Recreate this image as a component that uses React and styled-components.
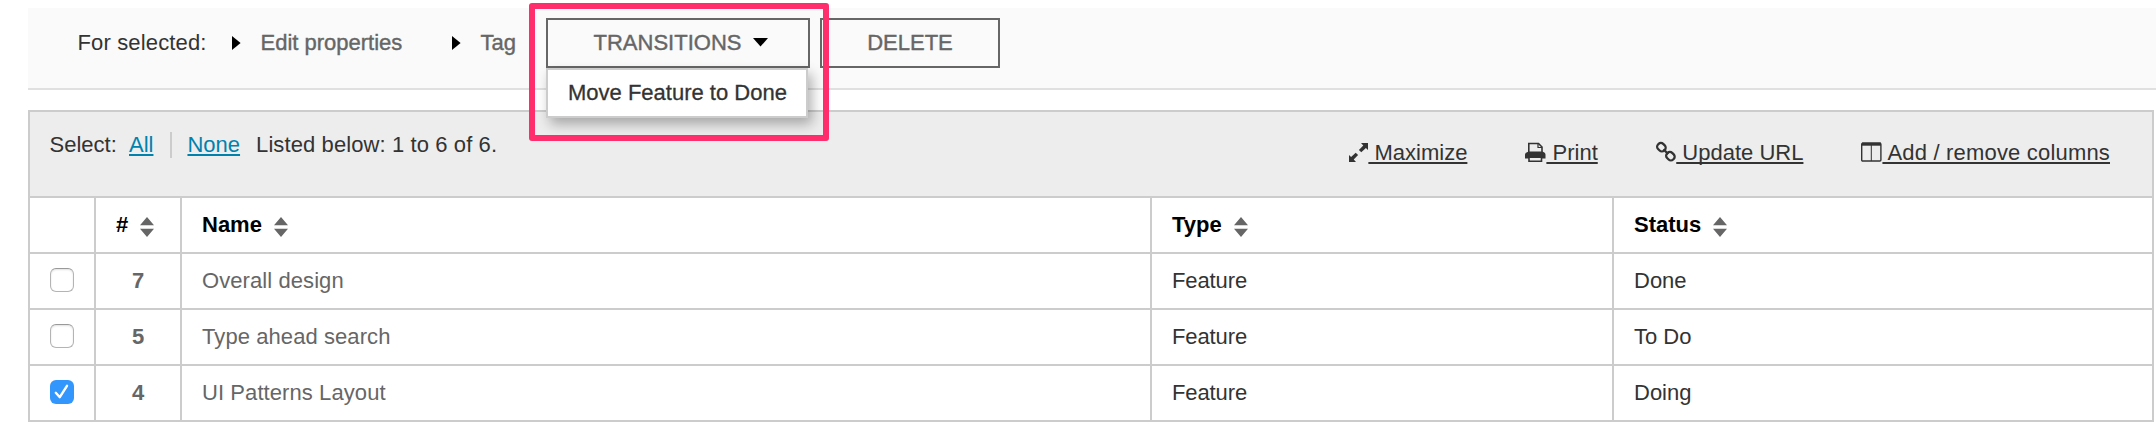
import React from "react";
import styled, { createGlobalStyle } from "styled-components";

const GlobalStyle = createGlobalStyle`
  *, *::before, *::after { box-sizing: border-box; }
  body {
    margin: 0;
    background: #fff;
    color: #333;
    font: 22px/26px "Liberation Sans", Arial, Helvetica, sans-serif;
    overflow: hidden;
  }
`;

const Page = styled.main`
  position: relative;
  height: 422px;
  padding: 8px 2px 0 28px;
`;

const ActionBar = styled.header`
  display: flex;
  align-items: flex-start;
  height: 82px;
  margin-right: -2px;
  padding: 10px 0 0 49.5px;
  background: #fafafa;
  border-bottom: 2px solid #e0e0e0;
`;

const Label = styled.span`
  width: 154.5px;
  line-height: 49px;
  white-space: nowrap;
  letter-spacing: 0.15px;
`;

const Disclosure = styled.button`
  display: flex;
  align-items: center;
  gap: 19.5px;
  width: ${(p) => p.$width}px;
  height: 49px;
  padding: 0;
  border: 0;
  background: none;
  color: #666;
  font: inherit;
  -webkit-text-stroke: 0.4px #666;
  white-space: nowrap;
`;

const MenuAnchor = styled.div`
  position: relative;
  margin-right: 10px;
`;

const Button = styled.button`
  display: flex;
  align-items: center;
  justify-content: center;
  gap: 12px;
  width: ${(p) => p.$width}px;
  height: 50px;
  padding: 0 0 1px ${(p) => p.$indent || 0}px;
  border: 2px solid #666;
  background: #fafafa;
  color: #666;
  font: inherit;
  -webkit-text-stroke: 0.4px #666;
  white-space: nowrap;
`;

const Menu = styled.ul`
  position: absolute;
  z-index: 2;
  top: 50px;
  left: 0;
  width: 262px;
  height: 50px;
  margin: 0;
  padding: 0 0 0 20px;
  list-style: none;
  border: 2px solid #ccc;
  background: #fff;
  box-shadow: 4px 6px 12px rgba(0, 0, 0, 0.3);
`;

const MenuItem = styled.li`
  line-height: 46px;
  white-space: nowrap;
  -webkit-text-stroke: 0.3px #333;
`;

const Highlight = styled.div`
  position: absolute;
  z-index: 3;
  top: 3px;
  left: 529px;
  width: 300px;
  height: 138px;
  border: 6px solid #ff2d6b;
  border-radius: 3px;
  pointer-events: none;
`;

const Panel = styled.section`
  margin-top: 20px;
  border: 2px solid #ccc;
`;

const PanelBar = styled.div`
  display: flex;
  justify-content: space-between;
  height: 84px;
  padding: 20px 42px 0 19.5px;
  background: #ededed;
`;

const Selection = styled.div`
  display: flex;
  height: 26px;
  white-space: nowrap;
`;

const SelectLabel = styled.span`
  width: 79.5px;
`;

const SelectLink = styled.a`
  color: #0082ad;
  text-decoration: underline;
  text-decoration-thickness: 2px;
  text-underline-offset: 2px;
  text-decoration-skip-ink: none;
`;

const Separator = styled.i`
  width: 2px;
  height: 26px;
  margin: 0 15.5px 0 16.5px;
  background: #ccc;
`;

const Summary = styled.span`
  margin-left: 16px;
  letter-spacing: 0.1px;
`;

const Tools = styled.nav`
  display: flex;
  padding-top: 8px;
`;

const Tool = styled.a`
  display: flex;
  margin-left: ${(p) => p.$before || 0}px;
  white-space: pre;
`;

const ToolText = styled.span`
  text-decoration: underline;
  text-decoration-thickness: 2px;
  text-underline-offset: 2px;
  text-decoration-skip-ink: none;
  letter-spacing: ${(p) => p.$spacing || 0}px;
`;

const Row = styled.div`
  display: grid;
  grid-template-columns: 66px 86px 970px 462px 1fr;
  height: 56px;
  border-top: 2px solid #ccc;
`;

const Cell = styled.div`
  display: flex;
  align-items: center;
  justify-content: ${(p) => (p.$center ? "center" : "flex-start")};
  padding: ${(p) => (p.$center ? "0 0 1px" : "0 0 1px 20px")};
  border-right: ${(p) => (p.$last ? "0" : "2px solid #ccc")};
  color: ${(p) => p.$color || "#333"};
  font-weight: ${(p) => (p.$bold ? 700 : 400)};
  letter-spacing: ${(p) => p.$spacing || 0}px;
`;

const HeadCell = styled(Cell)`
  gap: 12px;
  padding-right: ${(p) => (p.$center ? 6 : 0)}px;
  color: #000;
  font-weight: 700;
`;

const SortIcon = styled.svg`
  margin-top: 4px;
`;

const Check = styled.span`
  display: flex;
  align-items: center;
  justify-content: center;
  width: 24px;
  height: 24px;
  margin-top: -1px;
  border: ${(p) => (p.$on ? "0" : "1px solid #b4b4b4")};
  border-top-color: #999;
  border-radius: 6px;
  background: ${(p) => (p.$on ? "#3296fd" : "#fff")};
  box-shadow: ${(p) => (p.$on ? "none" : "inset 0 1px 2px rgba(0, 0, 0, 0.12)")};
`;

const RightTriangle = () => (
  <svg width="9" height="14" viewBox="0 0 9 14"><path d="M0 0 8.6 7 0 14Z" fill="#000" /></svg>
);

const DownTriangle = () => (
  <svg width="15" height="9" viewBox="0 0 15 9"><path d="M0 0h15L7.5 8.6Z" fill="#000" /></svg>
);

const Sort = () => (
  <SortIcon width="14" height="20" viewBox="0 0 14 20" fill="#666">
    <path d="M7 0 14 8.300H0ZM0 11.700h14L7 20Z" />
  </SortIcon>
);

const MaximizeIcon = () => (
  <svg width="19" height="26" viewBox="0 0 19 26" fill="#333">
    <path d="M12 3h7v7l-2.100-1.900-4.600 4.200-2.400-2.400 4.400-4.500Z" />
    <path d="M7 22H0v-7l2.100 1.900 4.600-4.200 2.400 2.400-4.400 4.500Z" />
  </svg>
);

const PrintIcon = () => (
  <svg width="21" height="26" viewBox="0 0 21 26">
    <path d="M3.800 13V3.500h9.700l3.500 3.500v6" fill="#ededed" stroke="#333" strokeWidth="1.600" />
    <path d="M13 3.500v4h4" fill="none" stroke="#333" strokeWidth="1.200" />
    <path d="M2.500 12 4 11.500h13l1.500.5q2 .6 2 2.500V18.500H0v-4Q0 12.600 2.500 12Z" fill="#333" />
    <path d="M4 17.200h12.500v4H4Z" fill="#ededed" stroke="#333" strokeWidth="1.600" />
  </svg>
);

const LinkIcon = () => (
  <svg width="20" height="26" viewBox="0 0 20 26" fill="none" stroke="#333" strokeWidth="2.300">
    <rect x="-4.300" y="-3.600" width="8.600" height="7.200" rx="3.200" transform="translate(5.400 7.200) rotate(45)" />
    <rect x="-4.300" y="-3.600" width="8.600" height="7.200" rx="3.200" transform="translate(14.400 16.200) rotate(45)" />
    <path d="m7.500 9.300 4.700 4.800" />
  </svg>
);

const ColumnsIcon = () => (
  <svg width="21" height="26" viewBox="0 0 21 26">
    <rect x=".7" y="3.200" width="19.200" height="17.800" rx="1" fill="none" stroke="#333" strokeWidth="1.400" />
    <path d="M1 2.500h19v3.200H1Z" fill="#333" />
    <path d="M10.300 5v16" stroke="#333" strokeWidth="1" />
  </svg>
);

const tools = [
  { text: " Maximize", Icon: MaximizeIcon },
  { text: " Print", Icon: PrintIcon, before: 58 },
  { text: " Update URL", Icon: LinkIcon, before: 58.5 },
  { text: " Add / remove columns", Icon: ColumnsIcon, before: 58, spacing: 0.18 },
];

const rows = [
  { id: 7, name: "Overall design", status: "Done" },
  { id: 5, name: "Type ahead search", status: "To Do" },
  { id: 4, name: "UI Patterns Layout", status: "Doing", checked: true },
];

export default function App() {
  return (
    <Page>
      <GlobalStyle />
      <ActionBar>
        <Label>For selected:</Label>
        <Disclosure $width={220}><RightTriangle />Edit properties</Disclosure>
        <Disclosure $width={94}><RightTriangle />Tag</Disclosure>
        <MenuAnchor>
          <Button $width={264} $indent={6}>TRANSITIONS<DownTriangle /></Button>
          <Menu><MenuItem>Move Feature to Done</MenuItem></Menu>
        </MenuAnchor>
        <Button $width={180}>DELETE</Button>
      </ActionBar>
      <Panel>
        <PanelBar>
          <Selection>
            <SelectLabel>Select:</SelectLabel>
            <SelectLink>All</SelectLink>
            <Separator />
            <SelectLink>None</SelectLink>
            <Summary>Listed below: 1 to 6 of 6.</Summary>
          </Selection>
          <Tools>
            {tools.map(({ text, Icon, before, spacing }) => (
              <Tool key={text} $before={before}>
                <Icon />
                <ToolText $spacing={spacing}>{text}</ToolText>
              </Tool>
            ))}
          </Tools>
        </PanelBar>
        <Row>
          <HeadCell />
          <HeadCell $center>#<Sort /></HeadCell>
          <HeadCell>Name<Sort /></HeadCell>
          <HeadCell>Type<Sort /></HeadCell>
          <HeadCell $last>Status<Sort /></HeadCell>
        </Row>
        {rows.map((row) => (
          <Row key={row.id}>
            <Cell $center>
              <Check $on={row.checked}>
                {row.checked && (
                  <svg width="16" height="16" viewBox="0 0 16 16">
                    <path d="m1.800 8.800 4 4.400L13 1.800" fill="none" stroke="#fff" strokeWidth="2.400" strokeLinecap="round" strokeLinejoin="round" />
                  </svg>
                )}
              </Check>
            </Cell>
            <Cell $center $bold $color="#666">{row.id}</Cell>
            <Cell $color="#666" $spacing={0.08}>{row.name}</Cell>
            <Cell $spacing={-0.1}>Feature</Cell>
            <Cell $last>{row.status}</Cell>
          </Row>
        ))}
      </Panel>
      <Highlight />
    </Page>
  );
}
